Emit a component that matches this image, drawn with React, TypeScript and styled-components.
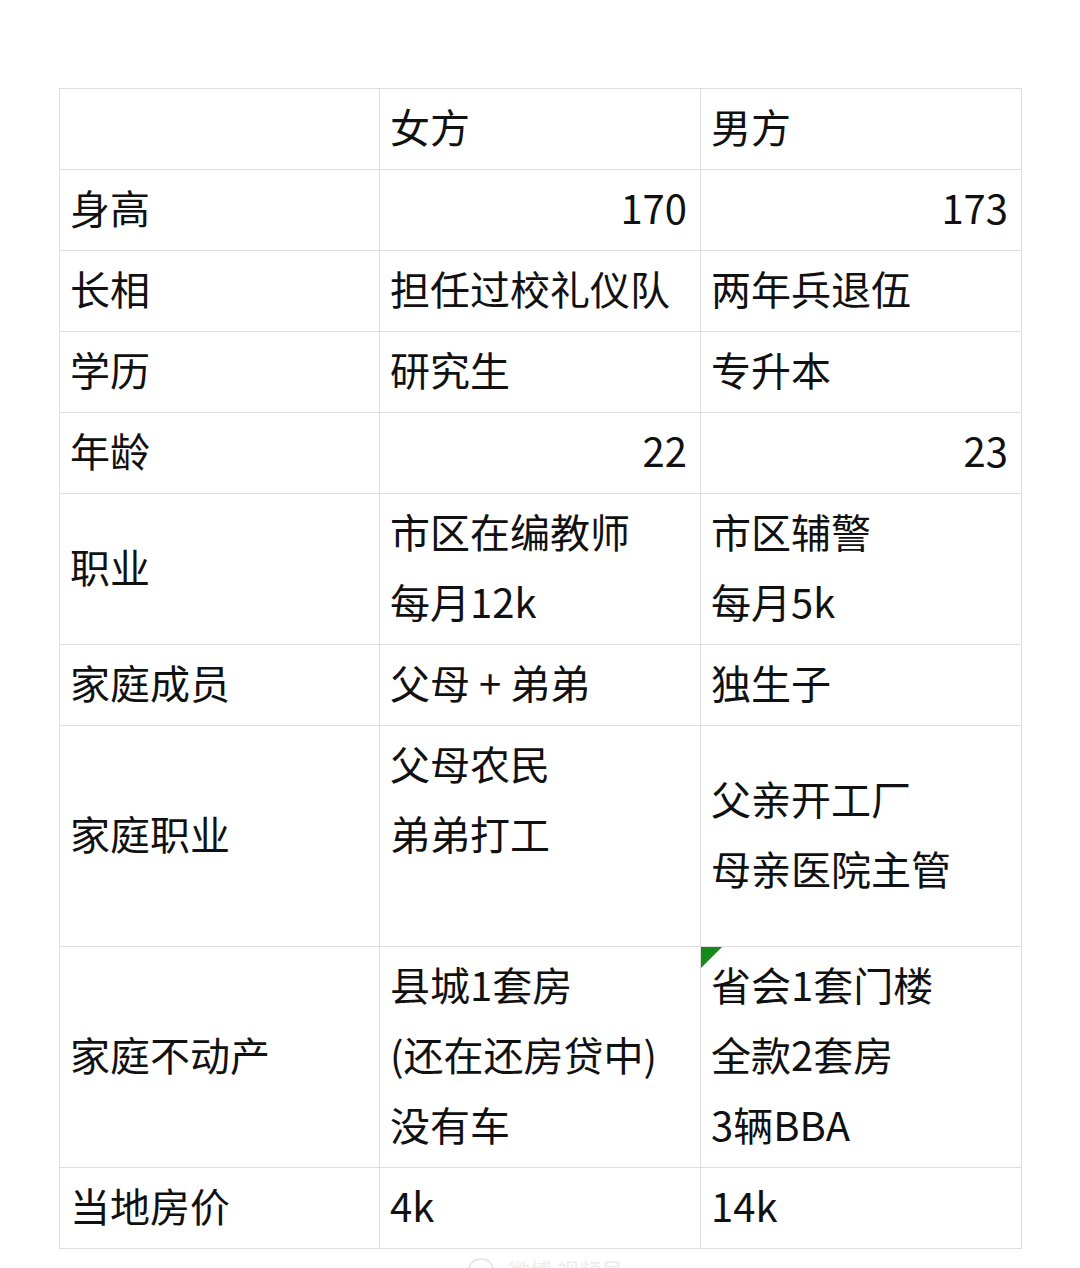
import React from 'react';
import styled, { createGlobalStyle } from 'styled-components';

type RowType = {
  label: string,
  female: string[],
  male: string[],
  numeric?: boolean,
  maleMarked?: boolean
};

const rows: RowType[] = [
  { label: '身高', female: ['170'], male: ['173'], numeric: true },
  { label: '长相', female: ['担任过校礼仪队'], male: ['两年兵退伍'] },
  { label: '学历', female: ['研究生'], male: ['专升本'] },
  { label: '年龄', female: ['22'], male: ['23'], numeric: true },
  { label: '职业', female: ['市区在编教师', '每月12k'], male: ['市区辅警', '每月5k'] },
  { label: '家庭成员', female: ['父母 + 弟弟'], male: ['独生子'] },
  // the female cell keeps an empty third line, so its text sits high
  { label: '家庭职业', female: ['父母农民', '弟弟打工', ''], male: ['父亲开工厂', '母亲医院主管'] },
  {
    label: '家庭不动产',
    female: ['县城1套房', '(还在还房贷中)', '没有车'],
    male: ['省会1套门楼', '全款2套房', '3辆BBA'],
    maleMarked: true
  },
  { label: '当地房价', female: ['4k'], male: ['14k'] },
];

const renderLines = (lines: string[]) => {
  return lines.map((line: string, i: number) => (
    <Line key={i}>{line === '' ? '\u00a0' : line}</Line>
  ));
}

export default function App() {
  return (
    <Page>
      <GlobalStyle />
      <Sheet>
        <colgroup>
          <col style={{ width: 320 }} />
          <col style={{ width: 321 }} />
          <col style={{ width: 321 }} />
        </colgroup>
        <tbody>
          <tr>
            <Cell />
            <Cell>女方</Cell>
            <Cell>男方</Cell>
          </tr>
          {rows.map((row: RowType) => (
            <tr key={row.label}>
              <Cell>{row.label}</Cell>
              <Cell numeric={row.numeric}>{renderLines(row.female)}</Cell>
              <Cell numeric={row.numeric} marked={row.maleMarked}>
                {row.maleMarked && <CommentMark />}
                {renderLines(row.male)}
              </Cell>
            </tr>
          ))}
        </tbody>
      </Sheet>
      <Watermark>
        <WatermarkIcon />
        <span>微博 视频号</span>
      </Watermark>
    </Page>
  );
}

const GlobalStyle = createGlobalStyle`
  html, body {
    margin: 0;
    padding: 0;
    background: #ffffff;
  }
  body {
    font-family: 'Noto Sans CJK SC', 'Noto Sans', sans-serif;
    color: #111111;
  }
`;

const Page = styled.div`
  width: 1080px;
  height: 1268px;
  overflow: hidden;
  box-sizing: border-box;
  padding: 88px 0 0 59px;
  position: relative;
`;

const Sheet = styled.table`
  width: 963px;
  table-layout: fixed;
  border-collapse: collapse;
`;

const Cell = styled.td<{ numeric?: boolean, marked?: boolean }>`
  border: 1px solid #dedede;
  padding: 2px 13px 8px 10px;
  font-size: 40px;
  line-height: 70px;
  vertical-align: middle;
  white-space: nowrap;
  text-align: ${(props) => props.numeric ? 'right' : 'left'};
  position: ${(props) => props.marked ? 'relative' : 'static'};
`;

const Line = styled.div`
  height: 70px;
`;

const CommentMark = styled.div`
  position: absolute;
  top: 0px;
  left: 0px;
  width: 0;
  height: 0;
  border-top: 21px solid #16891b;
  border-right: 21px solid transparent;
`;

const Watermark = styled.div`
  position: absolute;
  left: 468px;
  top: 1254px;
  display: flex;
  align-items: center;
  gap: 14px;
  font-size: 22px;
  line-height: 30px;
  color: #ececec;
`;

const WatermarkIcon = styled.div`
  width: 22px;
  height: 18px;
  border-radius: 50%;
  border: 2px solid #e8e8e8;
`;
